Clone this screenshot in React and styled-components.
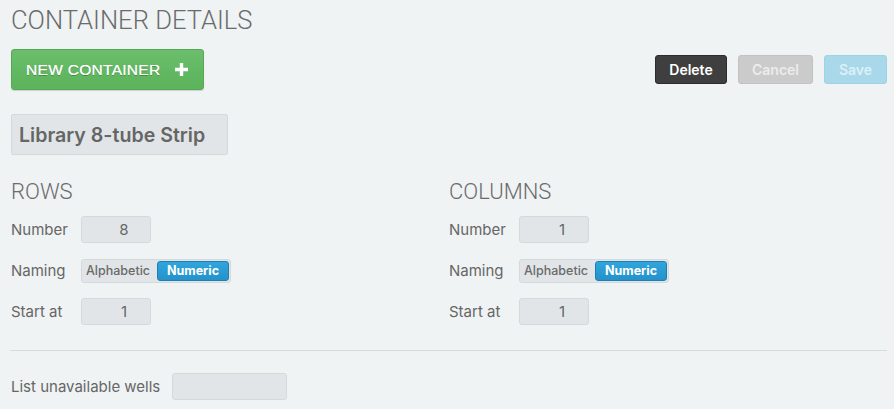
import React from "react";
import styled, { createGlobalStyle } from "styled-components";

const GlobalStyle = createGlobalStyle`
  html, body {
    margin: 0;
    padding: 0;
    background: #eff3f4;
  }
  body {
    font-family: Inter, "Liberation Sans", sans-serif;
    color: #666;
  }
  * {
    box-sizing: border-box;
  }
`;

const Page = styled.div`
  padding: 5px 7px 10px 11px;
  min-height: 409px;
`;

const Title = styled.h1`
  margin: 0;
  font-family: Roboto, "Liberation Sans", sans-serif;
  font-weight: 300;
  font-size: 25.6px;
  line-height: 30px;
  color: #6b6b6b;
`;

const Toolbar = styled.div`
  display: flex;
  align-items: center;
  justify-content: space-between;
  margin-top: 14px;
`;

const ActionGroup = styled.div`
  display: flex;
  gap: 11px;
`;

const NewButton = styled.button`
  display: flex;
  align-items: center;
  gap: 14px;
  height: 41px;
  width: 193px;
  padding: 0 0 0 14px;
  border: 1px solid #55a955;
  border-radius: 3px;
  background: linear-gradient(#6bbe6b, #5bb35b);
  box-shadow: 0 1px 1px rgba(0, 0, 0, 0.15);
  color: #fff;
  font-family: "Liberation Sans", Arial, sans-serif;
  font-weight: 400;
  font-size: 15.5px;
  letter-spacing: 0.3px;
  text-shadow: 0 1px 0 rgba(0, 0, 0, 0.25), 0 0 0.4px #fff;
`;

const variants = {
  dark: { bg: "#3f3f3f", border: "#2c2c2c", color: "#fff" },
  grey: { bg: "#cbcbcb", border: "#c2c2c2", color: "#ececec" },
  blue: { bg: "#a9d8eb", border: "#a0d1e5", color: "#dcf0f8" },
};

const ActionButton = styled.button`
  height: 29px;
  width: ${(p) => p.$w}px;
  padding: 0;
  border: 1px solid ${(p) => variants[p.$variant].border};
  border-radius: 3px;
  background: ${(p) => variants[p.$variant].bg};
  color: ${(p) => variants[p.$variant].color};
  font-family: Inter, "Liberation Sans", sans-serif;
  font-weight: 600;
  font-size: 14px;
`;

const NameField = styled.div`
  margin-top: 24px;
  width: 217px;
  height: 41px;
  display: flex;
  align-items: center;
  padding-left: 7px;
  background: #e1e5e7;
  border: 1px solid #d4dadc;
  border-radius: 2px;
  font-weight: 600;
  font-size: 19.6px;
  color: #666;
`;

const Sections = styled.div`
  display: grid;
  grid-template-columns: 438px 1fr;
  margin-top: 23px;
`;

const Section = styled.div`
  display: flex;
  flex-direction: column;
`;

const SectionTitle = styled.h2`
  margin: 0 0 11px;
  font-family: Roboto, "Liberation Sans", sans-serif;
  font-weight: 300;
  font-size: 22px;
  line-height: 27px;
  color: #6b6b6b;
`;

const FieldList = styled.div`
  display: flex;
  flex-direction: column;
  gap: 15.5px;
`;

const Field = styled.div`
  display: flex;
  align-items: center;
`;

const Label = styled.span`
  flex: none;
  width: ${(p) => (p.$auto ? "auto" : "70px")};
  white-space: nowrap;
  font-size: 15px;
  color: #666;
`;

const NumberBox = styled.div`
  width: ${(p) => p.$w || 70}px;
  height: 27px;
  display: flex;
  align-items: center;
  justify-content: center;
  padding-left: 16px;
  background: #e1e5e7;
  border: 1px solid #d4dadc;
  border-radius: 3px;
  font-size: 15px;
  color: #666;
`;

const Toggle = styled.div`
  display: flex;
  align-items: center;
  width: 150px;
  height: 24px;
  padding: 0 1px 0 4px;
  background: #e1e5e7;
  border: 1px solid #d4dadc;
  border-radius: 3px;
`;

const ToggleOption = styled.span`
  height: 20px;
  display: flex;
  align-items: center;
  justify-content: center;
  font-size: 12.5px;
  font-weight: ${(p) => (p.$active ? 700 : 500)};
  color: ${(p) => (p.$active ? "#fff" : "#6a6a6a")};
  ${(p) =>
    p.$active &&
    `
    width: 72px;
    margin-left: auto;
    background: linear-gradient(#30a5dc, #2492cb);
    border: 1px solid #1f7fb3;
    border-radius: 3px;
  `}
`;

const Divider = styled.hr`
  margin: 24.5px 0 0 -1px;
  border: 0;
  border-top: 1.5px solid #d6dcde;
`;

const Bottom = styled(Field)`
  margin-top: 22px;
  gap: 12px;
`;

const PlusIcon = () => (
  <svg width="13" height="13" viewBox="0 0 13 13">
    <path d="M4.8 0h3.4v4.8H13v3.4H8.2V13H4.8V8.2H0V4.8h4.8z" fill="#fff" />
  </svg>
);

function Axis({ title, number }) {
  return (
    <Section>
      <SectionTitle>{title}</SectionTitle>
      <FieldList>
        <Field>
          <Label>Number</Label>
          <NumberBox>{number}</NumberBox>
        </Field>
        <Field>
          <Label>Naming</Label>
          <Toggle>
            <ToggleOption>Alphabetic</ToggleOption>
            <ToggleOption $active>Numeric</ToggleOption>
          </Toggle>
        </Field>
        <Field>
          <Label>Start at</Label>
          <NumberBox>1</NumberBox>
        </Field>
      </FieldList>
    </Section>
  );
}

export default function App() {
  return (
    <>
      <GlobalStyle />
      <Page>
        <Title>CONTAINER DETAILS</Title>
        <Toolbar>
          <NewButton>
            NEW CONTAINER
            <PlusIcon />
          </NewButton>
          <ActionGroup>
            <ActionButton $variant="dark" $w={72}>Delete</ActionButton>
            <ActionButton $variant="grey" $w={75}>Cancel</ActionButton>
            <ActionButton $variant="blue" $w={63}>Save</ActionButton>
          </ActionGroup>
        </Toolbar>
        <NameField>Library 8-tube Strip</NameField>
        <Sections>
          <Axis title="ROWS" number="8" />
          <Axis title="COLUMNS" number="1" />
        </Sections>
        <Divider />
        <Bottom>
          <Label $auto>List unavailable wells</Label>
          <NumberBox $w={115} />
        </Bottom>
      </Page>
    </>
  );
}
